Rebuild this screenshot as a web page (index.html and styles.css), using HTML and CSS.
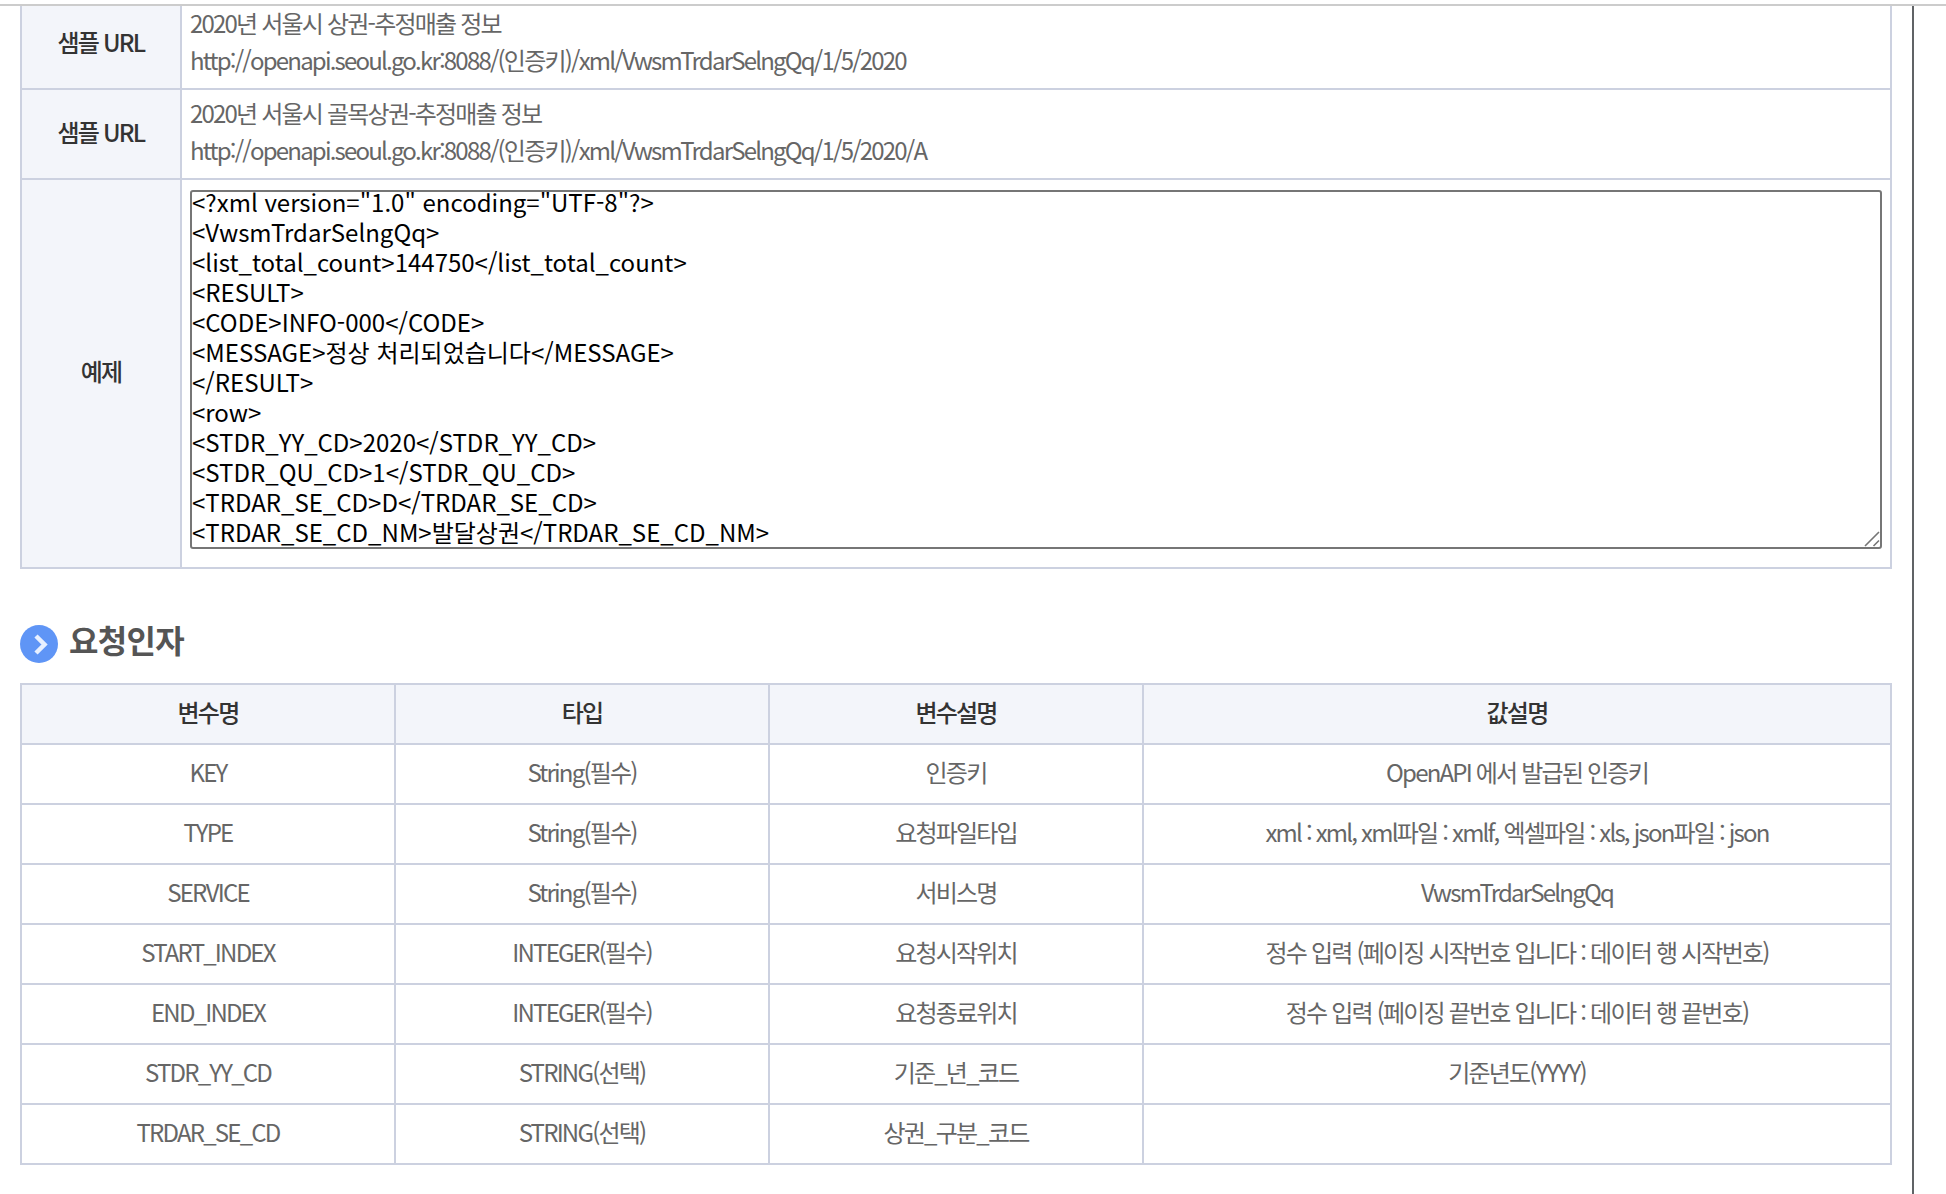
FILE: index.html
```html
<!DOCTYPE html>
<html lang="ko">
<head>
<meta charset="utf-8">
<title>요청인자</title>
<link rel="stylesheet" href="styles.css">
</head>
<body>
<div class="topbar"></div>
<div class="frame">
  <main class="content">
    <table class="info">
      <colgroup><col class="info-label"><col></colgroup>
      <tr class="url-row">
        <th>샘플 URL</th>
        <td>2020년 서울시 상권-추정매출 정보<br>http://openapi.seoul.go.kr:8088/(인증키)/xml/VwsmTrdarSelngQq/1/5/2020</td>
      </tr>
      <tr class="url-row">
        <th>샘플 URL</th>
        <td>2020년 서울시 골목상권-추정매출 정보<br>http://openapi.seoul.go.kr:8088/(인증키)/xml/VwsmTrdarSelngQq/1/5/2020/A</td>
      </tr>
      <tr>
        <th>예제</th>
        <td class="sample-cell"><div class="sample-box"><textarea class="sample" id="sample" wrap="off" spellcheck="false" readonly>&lt;?xml version="1.0" encoding="UTF-8"?&gt;
&lt;VwsmTrdarSelngQq&gt;
&lt;list_total_count&gt;144750&lt;/list_total_count&gt;
&lt;RESULT&gt;
&lt;CODE&gt;INFO-000&lt;/CODE&gt;
&lt;MESSAGE&gt;정상 처리되었습니다&lt;/MESSAGE&gt;
&lt;/RESULT&gt;
&lt;row&gt;
&lt;STDR_YY_CD&gt;2020&lt;/STDR_YY_CD&gt;
&lt;STDR_QU_CD&gt;1&lt;/STDR_QU_CD&gt;
&lt;TRDAR_SE_CD&gt;D&lt;/TRDAR_SE_CD&gt;
&lt;TRDAR_SE_CD_NM&gt;발달상권&lt;/TRDAR_SE_CD_NM&gt;
&lt;/row&gt;
&lt;/VwsmTrdarSelngQq&gt;</textarea><svg class="grip" viewBox="0 0 16 16" aria-hidden="true"><path d="M1 15 15 1M9.5 15 15 9.5" fill="none" stroke="#767676" stroke-width="1.6"/></svg></div></td>
      </tr>
    </table>

    <h2 class="section-title">
      <svg class="bullet" viewBox="0 0 38 38" aria-hidden="true">
        <circle cx="19" cy="19" r="19" fill="#5f95f6"/>
        <path d="M16 11 24.5 19.5 16 28" fill="none" stroke="#e8f0ff" stroke-width="4.5"/>
      </svg>
      <span class="title-text">요청인자</span>
    </h2>

    <table class="params">
      <colgroup><col class="c1"><col class="c2"><col class="c3"><col></colgroup>
      <tr><th>변수명</th><th>타입</th><th>변수설명</th><th>값설명</th></tr>
      <tr><td>KEY</td><td>String(필수)</td><td>인증키</td><td>OpenAPI 에서 발급된 인증키</td></tr>
      <tr><td>TYPE</td><td>String(필수)</td><td>요청파일타입</td><td>xml : xml, xml파일 : xmlf, 엑셀파일 : xls, json파일 : json</td></tr>
      <tr><td>SERVICE</td><td>String(필수)</td><td>서비스명</td><td>VwsmTrdarSelngQq</td></tr>
      <tr><td>START_INDEX</td><td>INTEGER(필수)</td><td>요청시작위치</td><td>정수 입력 (페이징 시작번호 입니다 : 데이터 행 시작번호)</td></tr>
      <tr><td>END_INDEX</td><td>INTEGER(필수)</td><td>요청종료위치</td><td>정수 입력 (페이징 끝번호 입니다 : 데이터 행 끝번호)</td></tr>
      <tr><td>STDR_YY_CD</td><td>STRING(선택)</td><td>기준_년_코드</td><td>기준년도(YYYY)</td></tr>
      <tr><td>TRDAR_SE_CD</td><td>STRING(선택)</td><td>상권_구분_코드</td><td></td></tr>
    </table>
  </main>
</div>
<script src="script.js"></script>
</body>
</html>
```
FILE: styles.css
```css
* { box-sizing: border-box; }
html, body { margin: 0; height: 100%; overflow: hidden; background: #fff; }
body {
  font-family: "Noto Sans CJK KR", "Noto Sans", sans-serif;
  font-size: 24px;
  color: #666;
  letter-spacing: -1.8px;
}
.topbar { height: 6px; border-bottom: 2px solid #ccc; }
.frame { height: 1188px; overflow: hidden; }
.content {
  width: 1914px;
  height: 100%;
  padding-left: 20px;
  padding-right: 21px;
  border-right: 2px solid #606366;
  overflow: hidden;
}
table { border-collapse: collapse; table-layout: fixed; width: 1872px; }
th, td { border: 2px solid #ccd1e0; padding: 0; }
th { background: #f3f5fa; color: #333; font-weight: 500; }

.info { margin-top: -8px; }
.info-label { width: 160px; }
.info th { padding-bottom: 6px; }
.info td { padding: 0 8px 6px; line-height: 37px; }
.url-row { height: 90px; }
.info .sample-cell { padding: 8px 8px 16px; height: 389px; line-height: 0; }
.sample-box { position: relative; }
.sample {
  display: block;
  width: 100%;
  height: 359px;
  margin: 0;
  padding: 0;
  border: 2px solid #767676;
  border-radius: 3px;
  font-family: "Noto Sans CJK KR", "Noto Sans", sans-serif;
  font-size: 24px;
  line-height: 30px;
  letter-spacing: 0;
  color: #000;
  background: #fff;
  overflow: hidden;
  resize: none;
  outline: none;
}
.grip { position: absolute; right: 2px; bottom: 2px; width: 16px; height: 16px; }

.section-title {
  display: flex;
  align-items: center;
  gap: 11px;
  height: 38px;
  margin: 56px 0 20px;
  font-size: 32px;
  font-weight: 700;
  color: #555;
  letter-spacing: -0.7px;
}
.title-text { padding-bottom: 10px; }
.bullet { width: 38px; height: 38px; flex: none; }

.params .c1 { width: 374px; }
.params .c2 { width: 374px; }
.params .c3 { width: 374px; }
.params tr { height: 60px; }
.params th, .params td { text-align: center; padding-bottom: 6px; }
```
FILE: script.js
```js
document.getElementById("sample").scrollTop = 5;
```
